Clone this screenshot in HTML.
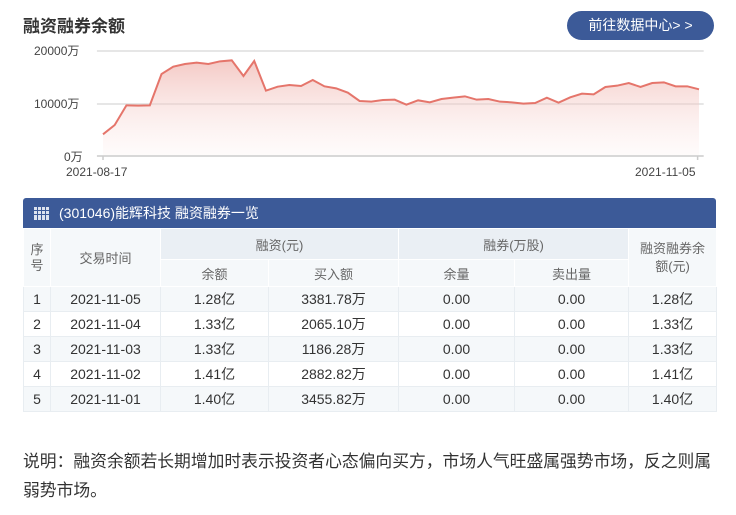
<!DOCTYPE html>
<html><head><meta charset="utf-8"><style>
*{margin:0;padding:0;box-sizing:border-box}
body{width:736px;height:515px;background:#fff;font-family:"Liberation Sans","Noto Sans CJK SC",sans-serif;color:#333;position:relative;overflow:hidden}
.title{position:absolute;left:23px;top:12px;font-size:17px;font-weight:bold;color:#333}
.btn{position:absolute;left:567px;top:11px;width:147px;height:29px;border-radius:15px;background:#3c5a98;color:#fff;font-size:14px;line-height:29px;text-align:center}
.lbl{position:absolute;font-size:12px;color:#444}
.tb{position:absolute;left:23px;top:198px;width:693px}
.hd{height:30px;background:#3c5a98;color:#fff;font-size:14px;line-height:30px;padding-left:36px;position:relative;border-radius:3px 3px 0 0}
.grid{position:absolute;left:11px;top:9px;width:15px;height:13px;background:
linear-gradient(90deg,transparent 3px,#3c5a98 3px,#3c5a98 4px,transparent 4px,transparent 7px,#3c5a98 7px,#3c5a98 8px,transparent 8px,transparent 11px,#3c5a98 11px,#3c5a98 12px,transparent 12px),
linear-gradient(transparent 3px,#3c5a98 3px,#3c5a98 4px,transparent 4px,transparent 7px,#3c5a98 7px,#3c5a98 8px,transparent 8px),#dde3ef}
table{border-collapse:collapse;width:693px;font-size:14px;table-layout:fixed}
td{text-align:center;border:1px solid #e8edf1;height:25px;color:#333}
th{font-weight:normal;color:#666;font-size:13px;border:1px solid #fff;background:#f5f8fa}
th.g{background:#eaeff4}
tr.a td{background:#f5f8fa}
.note{position:absolute;left:23px;top:447px;width:700px;font-size:16.8px;line-height:29px;color:#333}
svg *{vector-effect:non-scaling-stroke}
</style></head><body>
<div class="title">融资融券余额</div>
<div class="btn">前往数据中心&gt; &gt;</div>
<div class="lbl" style="left:34px;top:42px">20000万</div>
<div class="lbl" style="left:34px;top:95px">10000万</div>
<div class="lbl" style="left:64px;top:148px">0万</div>
<div class="lbl" style="left:66px;top:165px">2021-08-17</div>
<div class="lbl" style="left:635px;top:165px">2021-11-05</div>
<svg style="position:absolute;left:0;top:0" width="736" height="190" viewBox="0 0 1572 570" preserveAspectRatio="none">
<defs><linearGradient id="f" x1="0" y1="0" x2="0" y2="1"><stop offset="0" stop-color="#efb3ad" stop-opacity=".7"/><stop offset="1" stop-color="#fbe6e4" stop-opacity=".15"/></linearGradient></defs>
<line x1="207" y1="153" x2="1503" y2="153" stroke="#ddd" stroke-width="1.5"/>
<line x1="207" y1="312" x2="1503" y2="312" stroke="#ddd" stroke-width="1.5"/>
<path d="M220,403 245,375 270,316 295,317 320,316 345,222 370,200 395,192 420,188 445,192 470,184 495,181 520,228 543,183 568,272 593,260 618,255 643,258 668,240 693,259 718,265 743,278 768,303 793,305 818,300 843,299 868,314 893,301 918,307 943,297 968,293 993,289 1018,299 1043,297 1068,305 1093,307 1118,311 1143,309 1168,293 1193,308 1218,292 1243,281 1268,283 1293,261 1318,257 1343,249 1368,261 1393,249 1418,247 1443,259 1468,259 1493,268 L1493,468 220,468Z" fill="url(#f)"/>
<path d="M220,403 245,375 270,316 295,317 320,316 345,222 370,200 395,192 420,188 445,192 470,184 495,181 520,228 543,183 568,272 593,260 618,255 643,258 668,240 693,259 718,265 743,278 768,303 793,305 818,300 843,299 868,314 893,301 918,307 943,297 968,293 993,289 1018,299 1043,297 1068,305 1093,307 1118,311 1143,309 1168,293 1193,308 1218,292 1243,281 1268,283 1293,261 1318,257 1343,249 1368,261 1393,249 1418,247 1443,259 1468,259 1493,268" fill="none" stroke="#e5756b" stroke-width="2"/>
<line x1="207" y1="468" x2="1503" y2="468" stroke="#ccc" stroke-width="1.5"/>
<line x1="220" y1="468" x2="220" y2="480" stroke="#ccc" stroke-width="1.5"/>
<line x1="1490" y1="468" x2="1490" y2="480" stroke="#ccc" stroke-width="1.5"/>
</svg>
<div class="tb">
<div class="hd"><div class="grid"></div>(301046)能辉科技 融资融券一览</div>
<table>
<colgroup><col style="width:27px"><col style="width:110px"><col style="width:108px"><col style="width:130px"><col style="width:116px"><col style="width:114px"><col style="width:88px"></colgroup>
<tr style="height:31px"><th rowspan="2" style="line-height:16px">序<br>号</th><th rowspan="2">交易时间</th><th colspan="2" class="g">融资(元)</th><th colspan="2" class="g">融券(万股)</th><th rowspan="2" style="line-height:18px">融资融券余<br>额(元)</th></tr>
<tr style="height:27px"><th>余额</th><th>买入额</th><th>余量</th><th>卖出量</th></tr>
<tr class="a"><td>1</td><td>2021-11-05</td><td>1.28亿</td><td>3381.78万</td><td>0.00</td><td>0.00</td><td>1.28亿</td></tr>
<tr><td>2</td><td>2021-11-04</td><td>1.33亿</td><td>2065.10万</td><td>0.00</td><td>0.00</td><td>1.33亿</td></tr>
<tr class="a"><td>3</td><td>2021-11-03</td><td>1.33亿</td><td>1186.28万</td><td>0.00</td><td>0.00</td><td>1.33亿</td></tr>
<tr><td>4</td><td>2021-11-02</td><td>1.41亿</td><td>2882.82万</td><td>0.00</td><td>0.00</td><td>1.41亿</td></tr>
<tr class="a"><td>5</td><td>2021-11-01</td><td>1.40亿</td><td>3455.82万</td><td>0.00</td><td>0.00</td><td>1.40亿</td></tr>
</table>
</div>
<div class="note">说明：融资余额若长期增加时表示投资者心态偏向买方，市场人气旺盛属强势市场，反之则属弱势市场。</div>
</body></html>
